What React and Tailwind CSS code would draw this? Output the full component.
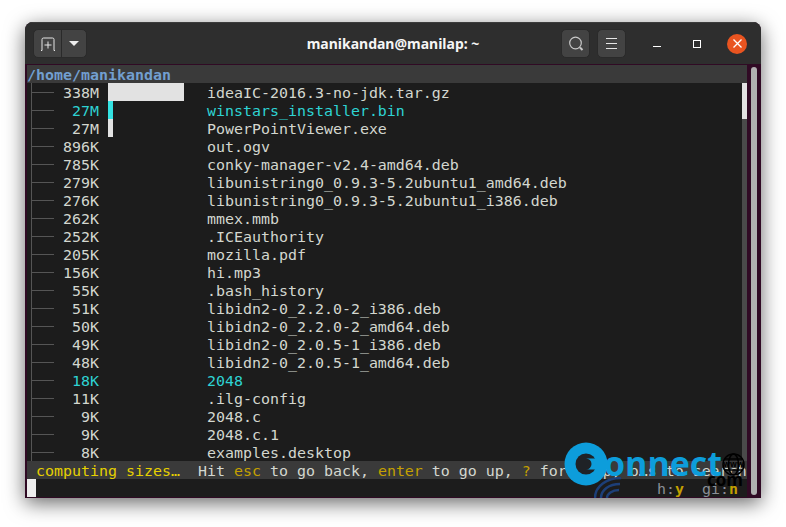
const rows = [
  { size: '338M', name: 'ideaIC-2016.3-no-jdk.tar.gz', bar: 'w-[76px] bg-[#e2e2e2]' },
  { size: '27M', name: 'winstars_installer.bin', bar: 'w-[5px] bg-[#34e2e2]', cyan: true },
  { size: '27M', name: 'PowerPointViewer.exe', bar: 'w-[5px] bg-[#e2e2e2]' },
  { size: '896K', name: 'out.ogv' },
  { size: '785K', name: 'conky-manager-v2.4-amd64.deb' },
  { size: '279K', name: 'libunistring0_0.9.3-5.2ubuntu1_amd64.deb' },
  { size: '276K', name: 'libunistring0_0.9.3-5.2ubuntu1_i386.deb' },
  { size: '262K', name: 'mmex.mmb' },
  { size: '252K', name: '.ICEauthority' },
  { size: '205K', name: 'mozilla.pdf' },
  { size: '156K', name: 'hi.mp3' },
  { size: '55K', name: '.bash_history' },
  { size: '51K', name: 'libidn2-0_2.2.0-2_i386.deb' },
  { size: '50K', name: 'libidn2-0_2.2.0-2_amd64.deb' },
  { size: '49K', name: 'libidn2-0_2.0.5-1_i386.deb' },
  { size: '48K', name: 'libidn2-0_2.0.5-1_amd64.deb' },
  { size: '18K', name: '2048', cyan: true },
  { size: '11K', name: '.ilg-config' },
  { size: '9K', name: '2048.c' },
  { size: '9K', name: '2048.c.1' },
  { size: '8K', name: 'examples.desktop' },
];

function Row({ row }) {
  const color = row.cyan ? 'text-[#2ed3d3]' : 'text-[#d3d7cf]';
  return (
    <div className="flex h-[18px] items-stretch">
      {/* tree branch */}
      <div className="ml-[4px] w-[23px] flex items-center border-l border-[#555555]">
        <div className="h-px w-[22px] bg-[#555555]" />
      </div>
      <div className={`w-[45px] text-right ${color}`}>{row.size}</div>
      <div className="ml-[9px] w-[90px] flex items-stretch">
        {row.bar && <div className={row.bar} />}
      </div>
      <div className={`ml-[9px] ${color}`}>{row.name}</div>
    </div>
  );
}

function Watermark() {
  return (
    <div className="absolute left-[564px] top-[441px] h-[57px] w-[190px]">
      <svg className="absolute left-[30px] top-[36px]" width="28" height="21" viewBox="0 0 28 21" fill="none" stroke="#1d3f78" strokeWidth="2.5">
        <path d="M1 21C1 9 13 1 27 1" />
        <path d="M7 21C7 13 15 7 26 7" />
        <path d="M13 21C13 17 18 13 25 13" />
      </svg>
      <svg className="absolute left-0 top-0" width="44" height="46" viewBox="0 0 44 46">
        <circle cx="22" cy="23" r="21.5" fill="#0d9ddb" />
        <circle cx="22" cy="23" r="10.5" fill="#1f2226" />
        <path d="M22 17.5a5.5 5.5 0 0 1 0 11h12V17.5z" fill="#0d9ddb" />
      </svg>
      <div className="absolute left-[40px] top-[4px] font-['Open_Sans',sans-serif] text-[34px] font-bold leading-[36px] text-[#0d9ddb]">
        onnect
      </div>
      <svg className="absolute left-[158px] top-[12px]" width="23" height="23" viewBox="0 0 23 23" fill="none" stroke="#000000" strokeWidth="1.5">
        <circle cx="11.5" cy="11.5" r="10.5" />
        <ellipse cx="11.5" cy="11.5" rx="5" ry="10.5" />
        <path d="M3 6h17M3 17h17" />
      </svg>
      <div className="absolute left-[159px] top-[18px] w-[21px] text-center font-['Open_Sans',sans-serif] text-[8px] font-bold leading-[10px] text-black">
        www
      </div>
      <div className="absolute left-[143px] top-[28px] font-['Open_Sans',sans-serif] text-[17px] font-bold leading-[22px] text-black">
        com
      </div>
    </div>
  );
}

export default function App() {
  return (
    <div className="relative h-[527px] w-[786px] overflow-hidden bg-white pl-[25px] pt-[22px]">
      <div className="flex h-[476px] w-[736px] flex-col overflow-hidden rounded-t-[8px] bg-[#300a24] shadow-[0_5px_20px_rgba(0,0,0,0.6)]">
        {/* title bar */}
        <div className="flex h-[42px] shrink-0 items-center border-t border-[#3c3c3c] bg-[#2e2e2e] pl-[8px] pr-[14px]">
          <div className="flex h-[29px] w-[54px] overflow-hidden rounded-[5px] border border-[#2a2a2a] bg-[#434343]">
            <div className="flex w-[28px] items-center justify-center border-r border-[#2a2a2a]">
              <svg width="16" height="14" viewBox="0 0 16 14" fill="none" stroke="#e6e6e6" strokeWidth="1">
                <path d="M1 13.5h1V2.5a1.5 1.5 0 0 1 1.5-1.5h9a1.5 1.5 0 0 1 1.5 1.5v11h1" />
                <path d="M8 4.5v7M4.5 8h7" />
              </svg>
            </div>
            <div className="flex flex-1 items-center justify-center">
              <div className="h-0 w-0 border-x-[5px] border-t-[5px] border-x-transparent border-t-[#eeeeee]" />
            </div>
          </div>
          <div className="flex-1 pl-[138px] text-center font-['Noto_Sans',sans-serif] text-[14px] font-bold leading-[18px] text-[#f5f5f5]">
            manikandan@manilap: ~
          </div>
          <div className="flex h-[29px] w-[29px] items-center justify-center rounded-[5px] border border-[#2a2a2a] bg-[#434343]">
            <svg width="16" height="16" viewBox="0 0 16 16" fill="none" stroke="#c8c8c8" strokeWidth="1.2">
              <circle cx="7.5" cy="7" r="5.8" />
              <path d="M12 11.5l2.5 2.5" strokeWidth="2" />
            </svg>
          </div>
          <div className="ml-[7px] flex h-[29px] w-[29px] flex-col items-center justify-center gap-[4px] rounded-[5px] border border-[#2a2a2a] bg-[#434343]">
            <div className="h-px w-[11px] bg-[#e6e6e6]" />
            <div className="h-px w-[11px] bg-[#e6e6e6]" />
            <div className="h-px w-[11px] bg-[#e6e6e6]" />
          </div>
          <div className="ml-[27px] flex w-[8px] items-center justify-center pt-[5px]">
            <div className="h-[1px] w-[8px] bg-white" />
          </div>
          <div className="ml-[32px] h-[8px] w-[8px] border border-white" />
          <div className="ml-[26px] flex h-[20px] w-[20px] items-center justify-center rounded-full bg-[#e95420]">
            <svg width="9" height="9" viewBox="0 0 9 9" stroke="#ffffff" strokeWidth="1.3">
              <path d="M0.5 0.5l8 8M8.5 0.5l-8 8" />
            </svg>
          </div>
        </div>

        {/* terminal */}
        <div className="flex min-h-0 flex-1 border-t border-[#300a24]">
          <div className="ml-[2px] flex w-[720px] flex-col font-['DejaVu_Sans_Mono',monospace] text-[14.95px] leading-[20px]">
            <div className="h-[18px] bg-[#3a3a3a] font-bold text-[#729fcf]">/home/manikandan</div>
            <div className="flex bg-[#1c1c1c]">
              <div className="h-[378px] w-[715px] overflow-hidden">
                {rows.map((row) => (
                  <Row key={row.name} row={row} />
                ))}
              </div>
              <div className="flex w-[5px] flex-col bg-[#4a4a4a]">
                <div className="h-[36px] bg-[#e2e2e2]" />
              </div>
            </div>
            <div className="flex h-[18px] bg-[#3a3a3a]">
              <div className="w-[162px] pl-[9px] text-[#e6d000]">computing sizes…</div>
              <div className="whitespace-nowrap pl-[9px] text-[#d3d7cf]">
                Hit <span className="text-[#c4a000]">esc</span> to go back, <span className="text-[#c4a000]">enter</span> to go up, <span className="text-[#c4a000]">?</span> for help, o…s to search
              </div>
            </div>
            <div className="flex h-[18px] bg-[#1c1c1c]">
              <div className="h-[18px] w-[9px] bg-[#eeeeee]" />
              <div className="ml-[621px] whitespace-nowrap text-[#8a8f96]">
                h:<span className="font-bold text-[#c4a000]">y</span>
              </div>
              <div className="ml-[18px] whitespace-nowrap text-[#8a8f96]">
                gi:<span className="font-bold text-[#c4a000]">n</span>
              </div>
            </div>
          </div>
          <div className="ml-[4px] mt-[2px] h-[428px] w-[6px] rounded-full bg-[#b0b0b0]" />
        </div>
      </div>
      <Watermark />
    </div>
  );
}
